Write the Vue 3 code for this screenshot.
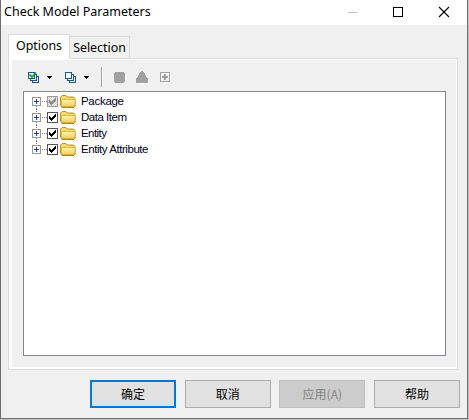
<script setup>
const rows = [
  { label: 'Package', partial: true, width: 43 },
  { label: 'Data Item', width: 46 },
  { label: 'Entity', width: 26 },
  { label: 'Entity Attribute', width: 67.5 },
]
const buttons = [
  { label: '确定', kind: 'primary' },
  { label: '取消', kind: '' },
  { label: '应用(A)', kind: 'disabled' },
  { label: '帮助', kind: '' },
]
</script>

<template>
  <div class="dialog">
    <header class="titlebar">
      <span class="title">Check Model Parameters</span>
      <svg class="controls" width="120" height="25" shape-rendering="crispEdges">
        <path d="M1 12.5h10" stroke="#c6c6c6" />
        <rect x="46.5" y="7.5" width="9" height="9" fill="none" stroke="#000" />
        <path d="M92 7l10 10M102 7l-10 10" stroke="#000" stroke-width="1.1" shape-rendering="auto" />
      </svg>
    </header>
    <nav class="tabs">
      <div class="tab active">Options</div>
      <div class="tab">Selection</div>
    </nav>
    <main class="panel">
      <div class="inner">
        <div class="toolbar">
          <svg width="160" height="22" viewBox="24 66 160 22" shape-rendering="crispEdges">
            <g v-for="x in [28, 65]" :key="x" fill="none" stroke="#1c5687">
              <rect :x="x + 0.5" y="72.5" width="6" height="6" fill="#fff" />
              <path :d="`M${x + 7} 74.5h1.5v6h-6v-2M${x + 9} 76.5h1.5v6h-6v-2`" />
            </g>
            <path d="M29.500 74.500l2.500 2.500 4-4.500" fill="none" stroke="#18a02c" stroke-width="1.8" shape-rendering="auto" />
            <path d="M47 76h5v1h-1v1h-1v1h-1v-1h-1v-1h-1zM84 76h5v1h-1v1h-1v1h-1v-1h-1v-1h-1z" />
            <path d="M101.5 67v20" stroke="#a0a0a0" />
            <path d="M102.5 67v20" stroke="#fff" />
            <path fill="#fff" d="M116 73h9v1h1v8h-1v1h-9zM141 72h3v1h1v2h1v2h1v2h1v1h1v4h-12v-4h1v-3h1z" />
            <path fill="#a0a0a0" d="M115 72h9v1h1v9h-1v1h-9v-1h-1v-9h1zM140 71h3v1h1v1h1v2h1v2h1v1h1v5h-12v-5h1v-1h1v-2h1v-2h1v-1h1z" />
            <path stroke="#fff" fill="none" d="M161.500 73.500h9v9h-9z" />
            <path stroke="#a0a0a0" fill="none" d="M160.500 72.500h9v9h-9z" />
            <path fill="#a0a0a0" d="M164 74h2v2h2v2h-2v2h-2v-2h-2v-2h2z" />
          </svg>
        </div>
        <div class="tree">
          <div v-for="(row, i) in rows" :key="row.label" class="row">
            <svg width="50" height="16" shape-rendering="crispEdges">
              <defs>
                <linearGradient id="folder" x2="0" y2="1">
                  <stop stop-color="#fff6ae" /><stop offset="1" stop-color="#f3cb55" />
                </linearGradient>
                <pattern id="dither" width="2" height="2" patternUnits="userSpaceOnUse">
                  <rect width="2" height="2" fill="#fff" /><path d="M0 0h1v1H0zM1 1h1v1H1z" fill="#c8c8c8" />
                </pattern>
              </defs>
              <path v-if="i" d="M7.500 0v4" stroke="#808080" stroke-dasharray="1 1" />
              <path v-if="i < 3" d="M7.500 13v3" stroke="#808080" stroke-dasharray="1 1" />
              <path d="M13 8.500h5" stroke="#808080" stroke-dasharray="1 1" />
              <rect x="3.500" y="4.500" width="8" height="8" fill="#fafafa" stroke="#989898" />
              <path d="M5 8.500h5M7.500 6v5" stroke="#244b91" />
              <rect x="18.500" y="3.500" width="10" height="10" :fill="row.partial ? 'url(#dither)' : '#fff'" :stroke="row.partial ? '#999' : '#555'" />
              <path d="M20 7v3h1v1h1v1h1v-1h1v-1h1v-1h1v-1h1V5h-1v1h-1v1h-1v1h-1v1h-1V8h-1V7z" :fill="row.partial ? '#888' : '#000'" />
              <g shape-rendering="auto">
                <path d="M31.500 12.500V4l1.500-1.500h4l1.500 1.500h6l1.500 1.500v7l-1.500 1.500h-11.500z" fill="#f6d86c" stroke="#c4931f" />
                <path d="M33.500 6.500h11.500l1 1v5l-1.500 1.500h-11l-1-1v-5.500z" fill="url(#folder)" stroke="#d9ac39" stroke-width=".8" />
                <path d="M32.500 14.300h12.500l1.400-1.800" fill="none" stroke="#a37414" />
              </g>
            </svg>
            <svg class="label" width="80" height="16"><text x="0" y="12" :textLength="row.width">{{ row.label }}</text></svg>
          </div>
        </div>
      </div>
    </main>
    <footer class="actions">
      <button v-for="b in buttons" :key="b.label" :class="b.kind" :disabled="b.kind === 'disabled'">{{ b.label }}</button>
    </footer>
  </div>
</template>

<style>
body { margin: 0; background: #c4c4c4; }
</style>
<style scoped>
* { box-sizing: border-box; }
.dialog {
  width: 468px; height: 419px; background: #f0f0f0;
  border: solid #6e6e6e; border-width: 0 1px 1px;
  font: 13px "Noto Sans", "Noto Sans CJK SC", sans-serif;
  color: #000;
}
.titlebar { height: 25px; background: #fff; display: flex; justify-content: space-between; }
.title { padding-left: 3px; font-size: 12.500px; line-height: 24px; white-space: nowrap; }
.tabs { display: flex; align-items: flex-end; height: 34px; padding-left: 7px; }
.tab {
  height: 23px; width: 60px; border: 1px solid #d9d9d9; border-left: 0;
  text-align: center; line-height: 21px; font-size: 12.400px; background: #f0f0f0;
}
.tab.active { position: relative; width: 62px; height: 25px; border-left: 1px solid #d9d9d9; border-bottom-color: #fff; background: #fff; line-height: 22px; }
.panel { width: 450px; height: 312px; margin: -1px 0 0 7px; border: 1px solid #dcdcdc; background: #fff; padding: 1px 1px 2px 3px; }
.inner { height: 307px; background: #f0f0f0; padding: 6px 10px 11px 11px; }
.toolbar { height: 25px; padding-left: 1px; }
.toolbar svg, .row svg { display: block; }
.tree { width: 423px; height: 265px; background: #fff; border: 1px solid #828790; padding: 1px 5px; }
.row { height: 16px; display: flex; }
.label { margin-left: 2px; font: 11.500px "Liberation Sans", sans-serif; fill: #00001c; overflow: visible; }
.actions { display: grid; grid-template-columns: repeat(4, 86px); column-gap: 8.667px; padding: 10px 0 0 89px; }
button {
  width: 86px; height: 28px; padding: 0 0 2px; border: 1px solid #adadad; background: #e1e1e1;
  font: 12px "Noto Sans CJK SC", sans-serif; color: #000;
}
button.primary { border: 2px solid #0078d7; }
button.disabled { background: #ccc; border-color: #bfbfbf; color: #838383; }
</style>
